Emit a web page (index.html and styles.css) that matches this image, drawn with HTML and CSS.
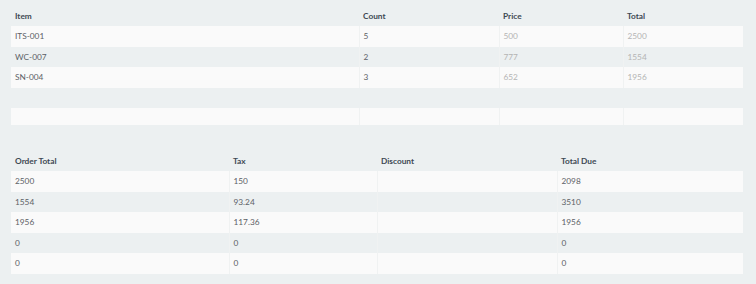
FILE: index.html
```html
<!DOCTYPE html>
<html>
<head>
<meta charset="utf-8">
<link rel="stylesheet" href="styles.css">
</head>
<body>
<div class="page">
  <table class="grid items">
    <colgroup><col class="c1"><col class="c2"><col class="c3"><col class="c4"></colgroup>
    <thead>
      <tr><th>Item</th><th>Count</th><th>Price</th><th>Total</th></tr>
    </thead>
    <tbody>
      <tr><td>ITS-001</td><td>5</td><td class="muted">500</td><td class="muted">2500</td></tr>
      <tr><td>WC-007</td><td>2</td><td class="muted">777</td><td class="muted">1554</td></tr>
      <tr><td>SN-004</td><td>3</td><td class="muted">652</td><td class="muted">1956</td></tr>
    </tbody>
  </table>

  <table class="grid items blank">
    <colgroup><col class="c1"><col class="c2"><col class="c3"><col class="c4"></colgroup>
    <tbody>
      <tr><td></td><td></td><td></td><td></td></tr>
    </tbody>
  </table>

  <table class="grid totals">
    <colgroup><col class="d1"><col class="d2"><col class="d3"><col class="d4"></colgroup>
    <thead>
      <tr><th>Order Total</th><th>Tax</th><th>Discount</th><th>Total Due</th></tr>
    </thead>
    <tbody>
      <tr><td>2500</td><td>150</td><td></td><td>2098</td></tr>
      <tr><td>1554</td><td>93.24</td><td></td><td>3510</td></tr>
      <tr><td>1956</td><td>117.36</td><td></td><td>1956</td></tr>
      <tr><td>0</td><td>0</td><td></td><td>0</td></tr>
      <tr><td>0</td><td>0</td><td></td><td>0</td></tr>
    </tbody>
  </table>
</div>
</body>
</html>
```

FILE: styles.css
```css
html, body {
  margin: 0;
  padding: 0;
  background: #ecf0f1;
}

.page {
  padding: 5px 13px 0 11px;
  font-family: Lato, "Open Sans", sans-serif;
  font-size: 8.3px;
  color: #5c6166;
}

.grid {
  width: 732px;
  table-layout: fixed;
  border-collapse: collapse;
  border-spacing: 0;
}

.grid th {
  text-align: left;
  font-weight: 700;
  color: #3e4953;
  height: 21px;
  padding: 0 4px;
  box-sizing: border-box;
  vertical-align: middle;
}

.grid td {
  height: 20.5px;
  padding: 0 4px;
  box-sizing: border-box;
  vertical-align: middle;
  border-left: 1px solid #f0f2f2;
}

.grid td:first-child {
  border-left: none;
}

.grid tbody tr:nth-child(odd) td {
  background: #fafafa;
}

.grid td.muted {
  color: #b4b4b4;
}

.c1 { width: 348px; }
.c2 { width: 140px; }
.c3 { width: 124px; }
.c4 { width: 120px; }

.d1 { width: 218px; }
.d2 { width: 148px; }
.d3 { width: 180px; }
.d4 { width: 186px; }

.blank {
  margin-top: 20.5px;
}

.blank td {
  height: 17px;
}

.totals {
  margin-top: 25px;
}
```
